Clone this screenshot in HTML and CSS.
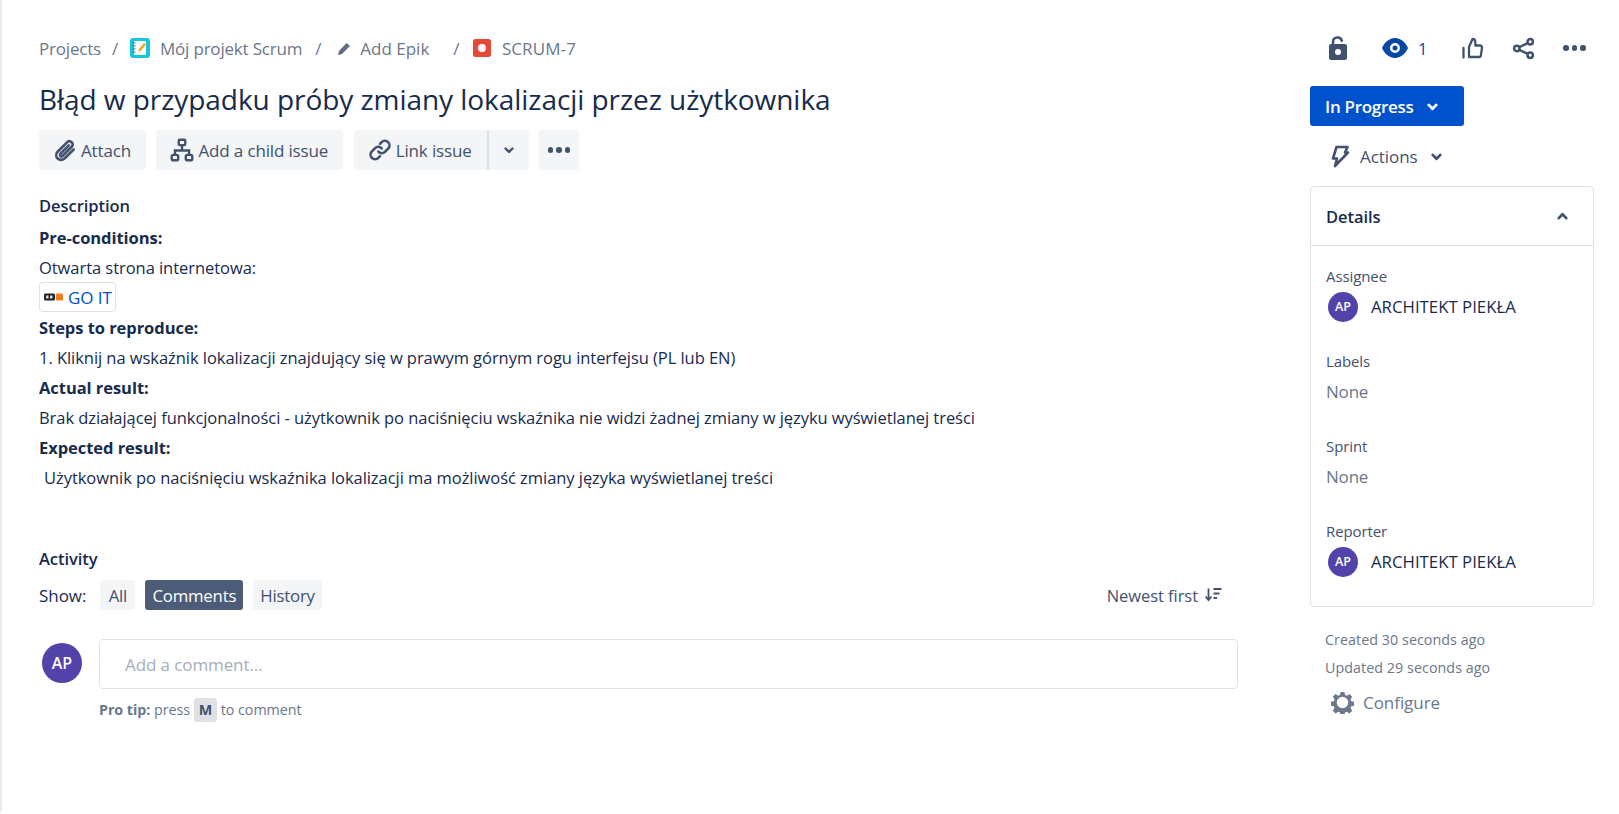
FILE: index.html
```html
<!DOCTYPE html>
<html lang="en">
<head>
    <meta charset="UTF-8">
    <meta name="viewport" content="width=device-width, initial-scale=1.0">
    <title>SCRUM-7</title>
    <link rel="stylesheet" href="styles.css">
</head>
<body>
    <div class="page">
        <main class="issue">
            <nav class="crumbs">
                <span>Projects</span><span class="sep">/</span>
                <svg class="crumb-ico" width="20" height="20" viewBox="0 0 20 20"><rect width="20" height="20" rx="3" fill="#14c4e0"/><rect x="4" y="3" width="12" height="14" rx="1" fill="#fff"/><path d="M2.500 5h3M2.500 8h3M2.500 11h3M2.500 14h3" stroke="#0d7f96" stroke-width="1"/><path d="M8 14l1-3 5-6 2 1.500-5 6z" fill="#f2a31b"/></svg>
                <span class="crumb-text">Mój projekt Scrum</span><span class="sep">/</span>
                <svg class="crumb-ico pen" width="15" height="15" viewBox="0 0 15 15"><path d="M1 14l1-4 7.500-8 3.500 3-8 8z" fill="#5e6c84"/></svg>
                <span class="crumb-text epic">Add Epik</span><span class="sep">/</span>
                <svg class="crumb-ico" width="18" height="18" viewBox="0 0 18 18"><rect width="18" height="18" rx="2.500" fill="#e5493a"/><circle cx="9" cy="9" r="4" fill="#fff"/></svg>
                <span class="crumb-text key">SCRUM-7</span>
            </nav>

            <h1>Błąd w przypadku próby zmiany lokalizacji przez użytkownika</h1>

            <div class="toolbar">
                <button class="tool">
                    <svg width="26" height="26" viewBox="0 0 24 24" fill="none" stroke="#42526e" stroke-width="2.400" stroke-linecap="round"><path d="M20 11.500l-8.500 8.300a4.400 4.400 0 0 1-6.300-6.200l9-9a3 3 0 0 1 4.200 4.200l-8.600 8.700a1.400 1.400 0 0 1-2-2l7.700-7.800"/></svg>
                    Attach
                </button>
                <button class="tool">
                    <svg width="26" height="26" viewBox="0 0 24 24" fill="none" stroke="#42526e" stroke-width="2.200"><rect x="9" y="2.500" width="6" height="5" rx="1"/><rect x="2.500" y="16.500" width="6" height="5" rx="1.500"/><rect x="15.500" y="16.500" width="6" height="5" rx="1.500"/><path d="M12 7.500v5M5.500 16.500v-4h13v4"/></svg>
                    Add a child issue
                </button>
                <div class="split">
                    <button class="tool link">
                        <svg width="26" height="26" viewBox="0 0 24 24" fill="none" stroke="#42526e" stroke-width="2.400" stroke-linecap="round"><path d="M10.500 13.500a4 4 0 0 0 6 .3l3-3a4.200 4.200 0 0 0-6-6l-1.500 1.500"/><path d="M13.500 10.500a4 4 0 0 0-6-.3l-3 3a4.200 4.200 0 0 0 6 6l1.500-1.500"/></svg>
                        Link issue
                    </button>
                    <button class="tool caret">
                        <svg width="12" height="12" viewBox="0 0 12 12" fill="none" stroke="#42526e" stroke-width="2.400" stroke-linecap="round" stroke-linejoin="round"><path d="M2.500 4.500L6 8l3.500-3.500"/></svg>
                    </button>
                </div>
                <button class="tool more"><span class="dots"><i></i><i></i><i></i></span></button>
            </div>

            <h2 class="desc-title">Description</h2>
            <div class="desc">
                <p class="strong">Pre-conditions:</p>
                <p>Otwarta strona internetowa:</p>
                <a class="chip">
                    <svg width="19" height="8" viewBox="0 0 19 8"><rect y="0.500" width="11" height="7" rx="1.500" fill="#222"/><rect x="2" y="2.500" width="2.500" height="3" fill="#ddd"/><rect x="6" y="2.500" width="2.500" height="3" fill="#ddd"/><rect x="12" y="0.500" width="7" height="7" rx="1" fill="#f47b20"/></svg>
                    GO IT
                </a>
                <p class="strong">Steps to reproduce:</p>
                <p>1. Kliknij na wskaźnik lokalizacji znajdujący się w prawym górnym rogu interfejsu (PL lub EN)</p>
                <p class="strong">Actual result:</p>
                <p>Brak działającej funkcjonalności - użytkownik po naciśnięciu wskaźnika nie widzi żadnej zmiany w języku wyświetlanej treści</p>
                <p class="strong">Expected result:</p>
                <p class="indent">Użytkownik po naciśnięciu wskaźnika lokalizacji ma możliwość zmiany języka wyświetlanej treści</p>
            </div>

            <h2 class="activity-title">Activity</h2>
            <div class="filter">
                <span class="show">Show:</span>
                <button class="pill all">All</button>
                <button class="pill active">Comments</button>
                <button class="pill">History</button>
                <span class="sort">Newest first
                    <svg width="18" height="16" viewBox="0 0 18 16" fill="none" stroke="#42526e" stroke-width="1.800"><path d="M4.500 1.500v11M1.500 9.500l3 3.500 3-3.500"/><path d="M9.500 2h8M9.500 6.500h6M9.500 11h3.500"/></svg>
                </span>
            </div>
            <div class="comment">
                <div class="avatar big">AP</div>
                <div class="comment-body">
                    <div class="comment-box">Add a comment...</div>
                    <div class="tip"><b>Pro tip:</b> press <kbd>M</kbd> to comment</div>
                </div>
            </div>
        </main>

        <aside class="side">
            <div class="side-icons">
                <svg width="18" height="24" viewBox="0 0 18 24"><path d="M4 9V6a4.500 4.500 0 0 1 8.800-1.300" fill="none" stroke="#42526e" stroke-width="2.600" stroke-linecap="round"/><path fill-rule="evenodd" d="M2 8h14a2 2 0 0 1 2 2v12a2 2 0 0 1-2 2H2a2 2 0 0 1-2-2V10a2 2 0 0 1 2-2zM9 13a3 3 0 1 0 0 6 3 3 0 0 0 0-6z" fill="#42526e"/></svg>
                <span class="watch">
                    <svg width="26" height="20" viewBox="0 0 26 20"><path fill-rule="evenodd" d="M13 0c6.500 0 11 5.500 13 10-2 4.500-6.500 10-13 10S2 14.500 0 10C2 5.500 6.500 0 13 0zm0 5a5 5 0 1 0 0 10 5 5 0 0 0 0-10zm0 2.500a2.500 2.500 0 1 1 0 5 2.500 2.500 0 0 1 0-5z" fill="#0747a6"/></svg>
                    <span>1</span>
                </span>
                <svg class="thumb" width="22" height="22" viewBox="0 0 22 22" fill="none" stroke="#42526e" stroke-width="2.300" stroke-linejoin="round"><path d="M7 10l3.500-8c1.800 0 2.800 1.200 2.800 3v3.500h4.700a2 2 0 0 1 2 2.300l-1.100 7.500a2 2 0 0 1-2 1.700H7z"/><path d="M1.500 11v9.500" stroke-linecap="round"/></svg>
                <svg class="share" width="23" height="23" viewBox="0 0 24 24" fill="none" stroke="#42526e" stroke-width="2.600"><circle cx="19" cy="5" r="2.800"/><circle cx="5" cy="12" r="2.800"/><circle cx="19" cy="19" r="2.800"/><path d="M7.500 10.700l9-4.400M7.500 13.300l9 4.400"/></svg>
                <span class="dots"><i></i><i></i><i></i></span>
            </div>

            <button class="status">In Progress
                <svg width="13" height="13" viewBox="0 0 12 12" fill="none" stroke="#fff" stroke-width="2.600" stroke-linecap="round" stroke-linejoin="round"><path d="M2.500 4.500L6 8l3.500-3.500"/></svg>
            </button>

            <div class="actions">
                <svg width="20" height="24" viewBox="0 0 20 24" fill="none" stroke="#42526e" stroke-width="2.600" stroke-linejoin="round" stroke-linecap="round"><path d="M6.500 3h11l-2.500 5.500h3L5 22l2-7.500H3z"/></svg>
                <span>Actions</span>
                <svg class="actions-caret" width="13" height="13" viewBox="0 0 12 12" fill="none" stroke="#42526e" stroke-width="2.600" stroke-linecap="round" stroke-linejoin="round"><path d="M2.500 4.500L6 8l3.500-3.500"/></svg>
            </div>

            <section class="panel">
                <header class="panel-head">
                    <span>Details</span>
                    <svg width="13" height="13" viewBox="0 0 12 12" fill="none" stroke="#42526e" stroke-width="2.600" stroke-linecap="round" stroke-linejoin="round"><path d="M2.500 7.500L6 4l3.500 3.500"/></svg>
                </header>
                <div class="panel-body">
                    <div class="field">
                        <div class="label">Assignee</div>
                        <div class="person"><div class="avatar">AP</div>ARCHITEKT PIEKŁA</div>
                    </div>
                    <div class="field">
                        <div class="label">Labels</div>
                        <div class="none">None</div>
                    </div>
                    <div class="field">
                        <div class="label">Sprint</div>
                        <div class="none">None</div>
                    </div>
                    <div class="field">
                        <div class="label">Reporter</div>
                        <div class="person"><div class="avatar">AP</div>ARCHITEKT PIEKŁA</div>
                    </div>
                </div>
            </section>

            <div class="dates">
                <div>Created 30 seconds ago</div>
                <div>Updated 29 seconds ago</div>
            </div>
            <div class="configure">
                <svg width="23" height="23" viewBox="0 0 24 24"><path fill-rule="evenodd" d="M10 1h4l.7 3.300 1.700.7 2.900-1.800 2.800 2.800-1.800 2.900.7 1.700 3 .7v4l-3 .7-.7 1.700 1.800 2.900-2.800 2.800-2.900-1.800-1.700.7-.7 3h-4l-.7-3-1.700-.7-2.900 1.800-2.800-2.800 1.800-2.900-.7-1.700-3-.7v-4l3-.7.7-1.700-1.800-2.900 2.800-2.800 2.900 1.800 1.700-.7zm2 5a6 6 0 1 0 0 12 6 6 0 0 0 0-12z" fill="#6b778c"/></svg>
                <span>Configure</span>
            </div>
        </aside>
    </div>
</body>
</html>
```

FILE: styles.css
```css
* {
    box-sizing: border-box;
}

body {
    margin: 0;
    font-family: "Open Sans", "Noto Sans", sans-serif;
    font-size: 16.500px;
    letter-spacing: -0.050px;
    color: #172b4d;
    background: #fff;
    border-left: 2px solid #ebecf0;
}

button {
    font: inherit;
    letter-spacing: inherit;
    border: none;
    cursor: pointer;
}

.page {
    display: flex;
    height: 812px;
    padding-left: 37px;
}

.issue {
    width: 1199px;
    padding-top: 36px;
}

.side {
    width: 284px;
    margin-left: 72px;
    padding-top: 34px;
}

/* breadcrumbs */
.crumbs {
    display: flex;
    align-items: center;
    height: 24px;
    font-size: 17px;
    letter-spacing: -0.200px;
    color: #6b778c;
}

.sep {
    margin: 0 8px 0 11px;
}

.crumb-text + .sep {
    margin-left: 13px;
}

.crumb-text.epic + .sep {
    margin-right: 9.500px;
}

.sep + .crumb-ico {
    margin-left: 4px;
}

.crumb-text {
    margin-left: 10px;
}

.sep + .pen {
    margin-left: 8px;
}

.crumb-text.epic {
    margin-left: 8px;
    margin-right: 11px;
    letter-spacing: 0;
}

.crumb-text.key {
    margin-left: 11px;
    letter-spacing: 0.100px;
}

h1 {
    margin: 19px 0 0;
    font-size: 28px;
    line-height: 40px;
    font-weight: 400;
}

/* toolbar */
.toolbar {
    display: flex;
    gap: 10.500px;
    margin-top: 11px;
}

.tool {
    display: flex;
    align-items: center;
    gap: 3px;
    height: 40px;
    padding: 0 15px 0 13px;
    background: #f4f5f7;
    color: #42526e;
    border-radius: 4px;
    font-size: 17px;
    letter-spacing: -0.150px;
}

.split {
    display: flex;
}

.tool.link {
    border-radius: 4px 0 0 4px;
    border-right: 2px solid #dfe1e6;
}

.tool.caret {
    width: 40px;
    padding: 0;
    justify-content: center;
    border-radius: 0 4px 4px 0;
}

.tool.more {
    width: 40px;
    padding: 0;
    justify-content: center;
}

.dots {
    display: flex;
    gap: 3px;
}

.dots i {
    width: 5.500px;
    height: 5.500px;
    border-radius: 50%;
    background: #42526e;
}

/* description */
h2 {
    margin: 0;
    font-size: 16.500px;
    font-weight: 600;
    line-height: 24px;
}

.desc-title {
    margin-top: 24px;
}

.desc {
    margin-top: 5px;
}

.desc p {
    margin: 0;
    height: 30px;
    line-height: 30px;
}

.desc p.strong {
    font-weight: 700;
}

.desc p.indent {
    padding-left: 5px;
}

.chip {
    display: flex;
    align-items: center;
    gap: 5px;
    width: 77px;
    height: 30px;
    margin: -1px 0 1px;
    padding-left: 4px;
    border: 1px solid #dfe1e6;
    border-radius: 4px;
    color: #0052cc;
    font-size: 17px;
}

/* activity */
.activity-title {
    margin-top: 54px;
}

.filter {
    display: flex;
    align-items: center;
    gap: 10px;
    height: 30px;
    margin-top: 9px;
}

.show {
    margin-right: 4px;
    font-size: 17px;
}

.pill {
    height: 30px;
    padding: 0 7px;
    background: #f4f5f7;
    color: #42526e;
    border-radius: 3px;
    font-size: 16.800px;
    letter-spacing: -0.200px;
}

.pill.all {
    width: 35px;
    padding: 0;
}

.pill.active {
    background: #4c5b78;
    color: #fff;
}

.sort {
    display: flex;
    align-items: center;
    gap: 6px;
    margin-left: auto;
    margin-right: 16px;
    color: #42526e;
    font-size: 16.500px;
    letter-spacing: -0.050px;
}

.comment {
    display: flex;
    margin-top: 29px;
    padding-left: 3px;
}

.avatar {
    display: flex;
    align-items: center;
    justify-content: center;
    flex-shrink: 0;
    width: 30px;
    height: 30px;
    border-radius: 50%;
    background: #5243aa;
    color: #fff;
    font-size: 12.500px;
    font-weight: 600;
}

.avatar.big {
    width: 40px;
    height: 40px;
    margin-top: 4px;
    font-size: 16px;
}

.comment-body {
    flex: 1;
    margin-left: 17px;
}

.comment-box {
    display: flex;
    align-items: center;
    height: 50px;
    padding-left: 25px;
    border: 1px solid #dfe1e6;
    border-radius: 4px;
    color: #a5adba;
    font-size: 17px;
    letter-spacing: -0.100px;
}

.tip {
    margin-top: 9px;
    font-size: 14.300px;
    color: #6b778c;
    line-height: 24px;
    letter-spacing: -0.050px;
}

kbd {
    display: inline-block;
    padding: 0 5px;
    background: #dfe1e6;
    border-radius: 3px;
    font-family: inherit;
    font-weight: 700;
    color: #42526e;
}

/* sidebar */
.side-icons {
    display: flex;
    align-items: center;
    height: 28px;
    padding-left: 19px;
}

.watch {
    display: flex;
    align-items: center;
    gap: 10px;
    margin-left: 35px;
    color: #0747a6;
}

.thumb {
    margin-left: 35px;
}

.share {
    margin-left: 28px;
}

.side-icons .dots {
    margin-left: 28px;
}

.status {
    display: flex;
    align-items: center;
    gap: 13px;
    width: 154px;
    height: 40px;
    margin-top: 24px;
    padding-left: 15px;
    background: #0052cc;
    color: #fff;
    border-radius: 3px;
    font-size: 17px;
    font-weight: 600;
    letter-spacing: -0.300px;
}

.actions {
    display: flex;
    align-items: center;
    gap: 10px;
    height: 40px;
    margin-top: 10px;
    padding-left: 20px;
    color: #42526e;
    font-size: 17px;
}

.actions-caret {
    margin-left: 2px;
}

.panel {
    margin-top: 10px;
    height: 421px;
    border: 1px solid #dfe1e6;
    border-radius: 4px;
}

.panel-head {
    display: flex;
    align-items: center;
    justify-content: space-between;
    height: 59px;
    padding: 0 24px 0 15px;
    border-bottom: 1px solid #dfe1e6;
    font-size: 16.500px;
    font-weight: 600;
}

.panel-body {
    padding: 18px 15px 0;
}

.field {
    height: 85px;
}

.label {
    font-size: 15px;
    line-height: 24px;
    color: #42526e;
    letter-spacing: -0.100px;
}

.person {
    display: flex;
    align-items: center;
    gap: 13px;
    height: 33px;
    margin-top: 2px;
    padding-left: 2px;
    font-size: 16.800px;
    letter-spacing: 0;
}

.none {
    height: 38px;
    line-height: 38px;
    color: #6b778c;
    font-size: 17px;
    letter-spacing: -0.200px;
}

.dates {
    margin-top: 19px;
    padding-left: 15px;
    font-size: 14.300px;
    line-height: 28px;
    color: #6b778c;
    letter-spacing: 0.050px;
}

.configure {
    display: flex;
    align-items: center;
    gap: 9px;
    height: 36px;
    margin-top: 2px;
    padding-left: 21px;
    color: #6b778c;
    font-size: 17px;
}
```
